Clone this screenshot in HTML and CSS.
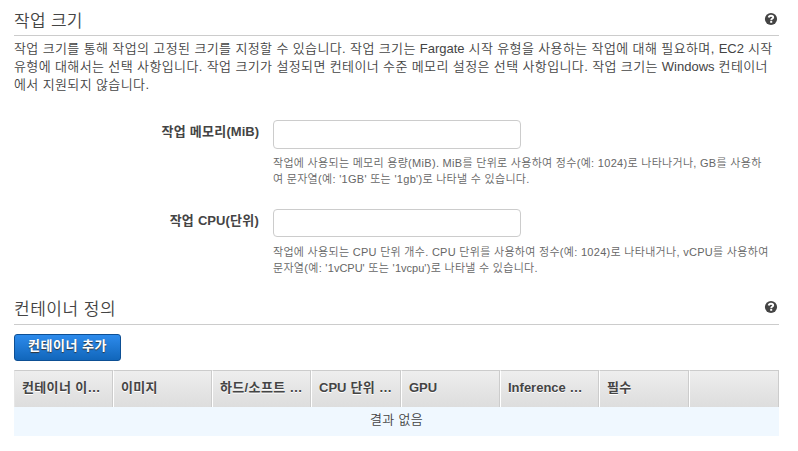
FILE: index.html
```html
<!DOCTYPE html>
<html lang="ko">
<head>
  <meta charset="UTF-8">
  <meta name="viewport" content="width=device-width, initial-scale=1.0">
  <title>작업 정의</title>
  <link rel="stylesheet" href="styles.css">
</head>
<body>
  <!-- 작업 크기 -->
  <section class="section task-size">
    <div class="section-header">
      <h2>작업 크기</h2>
      <svg class="help-icon" viewBox="0 0 12 12" role="img" aria-label="도움말">
        <circle cx="6" cy="6" r="6.1" fill="#444"/>
        <path d="M3.700 4.500C3.900 3.200 4.800 2.700 6 2.700s2.200.6 2.200 1.700C8.200 5.700 6.200 5.500 6.200 7.300" fill="none" stroke="#fff" stroke-width="1.9"/>
        <rect x="5.200" y="8" width="2" height="1.800" fill="#fff"/>
      </svg>
    </div>
    <p class="description">작업 크기를 통해 작업의 고정된 크기를 지정할 수 있습니다. 작업 크기는 <span class="en">Fargate</span> 시작 유형을 사용하는 작업에 대해 필요하며, <span class="en">EC2</span> 시작<br>유형에 대해서는 선택 사항입니다. 작업 크기가 설정되면 컨테이너 수준 메모리 설정은 선택 사항입니다. 작업 크기는 <span class="en">Windows</span> 컨테이너<br>에서 지원되지 않습니다.</p>

    <form class="size-form">
      <div class="form-group">
        <label for="task-memory">작업 메모리<span class="en">(MiB)</span></label>
        <div class="field">
          <input type="text" id="task-memory">
          <p class="help-text">작업에 사용되는 메모리 용량(MiB). MiB를 단위로 사용하여 정수(예: 1024)로 나타나거나, GB를 사용하<br>여 문자열(예: '1GB' 또는 '1gb')로 나타낼 수 있습니다.</p>
        </div>
      </div>
      <div class="form-group">
        <label for="task-cpu">작업 <span class="en">CPU</span>(단위)</label>
        <div class="field">
          <input type="text" id="task-cpu">
          <p class="help-text">작업에 사용되는 CPU 단위 개수. CPU 단위를 사용하여 정수(예: 1024)로 나타내거나, vCPU를 사용하여<br>문자열(예: '<span class="en">1vCPU</span>' 또는 '<span class="en">1vcpu</span>')로 나타낼 수 있습니다.</p>
        </div>
      </div>
    </form>
  </section>

  <!-- 컨테이너 정의 -->
  <section class="section">
    <div class="section-header">
      <h2>컨테이너 정의</h2>
      <svg class="help-icon" viewBox="0 0 12 12" role="img" aria-label="도움말">
        <circle cx="6" cy="6" r="6.1" fill="#444"/>
        <path d="M3.700 4.500C3.900 3.200 4.800 2.700 6 2.700s2.200.6 2.200 1.700C8.200 5.700 6.200 5.500 6.200 7.300" fill="none" stroke="#fff" stroke-width="1.9"/>
        <rect x="5.200" y="8" width="2" height="1.800" fill="#fff"/>
      </svg>
    </div>
    <button class="btn" type="button">컨테이너 추가</button>

    <table class="containers">
      <colgroup>
        <col class="wide"><col class="wide"><col class="wide"><col>
        <col class="wide"><col class="wide"><col><col>
      </colgroup>
      <thead>
        <tr>
          <th>컨테이너 이…</th>
          <th>이미지</th>
          <th>하드/소프트 …</th>
          <th><span class="en">CPU</span> 단위 …</th>
          <th class="en">GPU</th>
          <th class="en">Inference …</th>
          <th>필수</th>
          <th></th>
        </tr>
      </thead>
      <tbody>
        <tr>
          <td colspan="8">결과 없음</td>
        </tr>
      </tbody>
    </table>
  </section>
</body>
</html>
```
FILE: styles.css
```css
body {
  margin: 0;
  padding: 0 19px 0 14px;
  font-family: "Liberation Sans", "Noto Sans CJK KR", sans-serif;
  font-size: 13px;
  font-weight: 350;
  color: #444;
  background-color: #fff;
}

h2, p {
  margin: 0;
}

.task-size {
  height: 289px;
}

.section-header {
  display: flex;
  justify-content: space-between;
  height: 36px;
  padding: 9px 2px 0 0;
  box-sizing: border-box;
  border-bottom: 1px solid #ccc;
}

.section-header h2 {
  font-size: 17px;
  font-weight: 350;
  line-height: 24px;
  letter-spacing: 0.5px;
}

.task-size .section-header h2 {
  padding-top: 1px;
  letter-spacing: 0.3px;
}

.help-icon {
  width: 12px;
  height: 12px;
  margin-top: 4px;
  overflow: visible;
}

.section + .section .help-icon {
  margin-top: 3px;
}

.description {
  padding-top: 4px;
  line-height: 18px;
  letter-spacing: 0.38px;
  white-space: nowrap;
}

.size-form {
  padding-top: 26px;
}

.form-group {
  display: flex;
  height: 89px;
}

.form-group label {
  width: 245px;
  margin-right: 14px;
  padding-top: 2px;
  line-height: 20px;
  font-weight: bold;
  letter-spacing: 0.25px;
  text-align: right;
}

.form-group input {
  display: block;
  width: 248px;
  height: 29px;
  padding: 4px 6px;
  box-sizing: border-box;
  border: 1px solid #ccc;
  border-radius: 4px;
}

.form-group + .form-group input {
  height: 28px;
  margin-bottom: 1px;
}

.help-text {
  padding-top: 6px;
  font-size: 11px;
  line-height: 16px;
  letter-spacing: 0.3px;
  color: #666;
  white-space: nowrap;
}

.btn {
  display: block;
  width: 107px;
  height: 27px;
  margin: 9px 0;
  padding: 0 0 4px;
  border: 1px solid #0d4f94;
  border-radius: 3px;
  background: linear-gradient(#2d8bec, #1166bb);
  color: #fff;
  font-family: inherit;
  font-size: 13px;
  font-weight: bold;
  line-height: 20px;
  letter-spacing: 0.5px;
  text-shadow: 0 1px 1px #333;
}

.containers {
  width: 765px;
  table-layout: fixed;
  border-spacing: 0;
}

.containers col {
  width: 90px;
}

.containers col.wide {
  width: 99px;
}

.containers th {
  height: 37px;
  padding: 0 0 2px 7px;
  box-sizing: border-box;
  border-top: 1px solid #ccc;
  border-right: 1px solid #ccc;
  border-left: 1px solid #fff;
  background: linear-gradient(#eee, #ddd);
  line-height: 18px;
  letter-spacing: 0.35px;
  text-align: left;
  text-shadow: 0 1px 0 #fff;
  white-space: nowrap;
}

.containers th:first-child {
  border-left-color: #e6e6e6;
}

.containers td {
  height: 29px;
  padding: 0 0 3px;
  box-sizing: border-box;
  background-color: #f0f8ff;
  line-height: 18px;
  letter-spacing: 0.35px;
  text-align: center;
}

.en,
.containers th.en {
  letter-spacing: 0;
}
```
